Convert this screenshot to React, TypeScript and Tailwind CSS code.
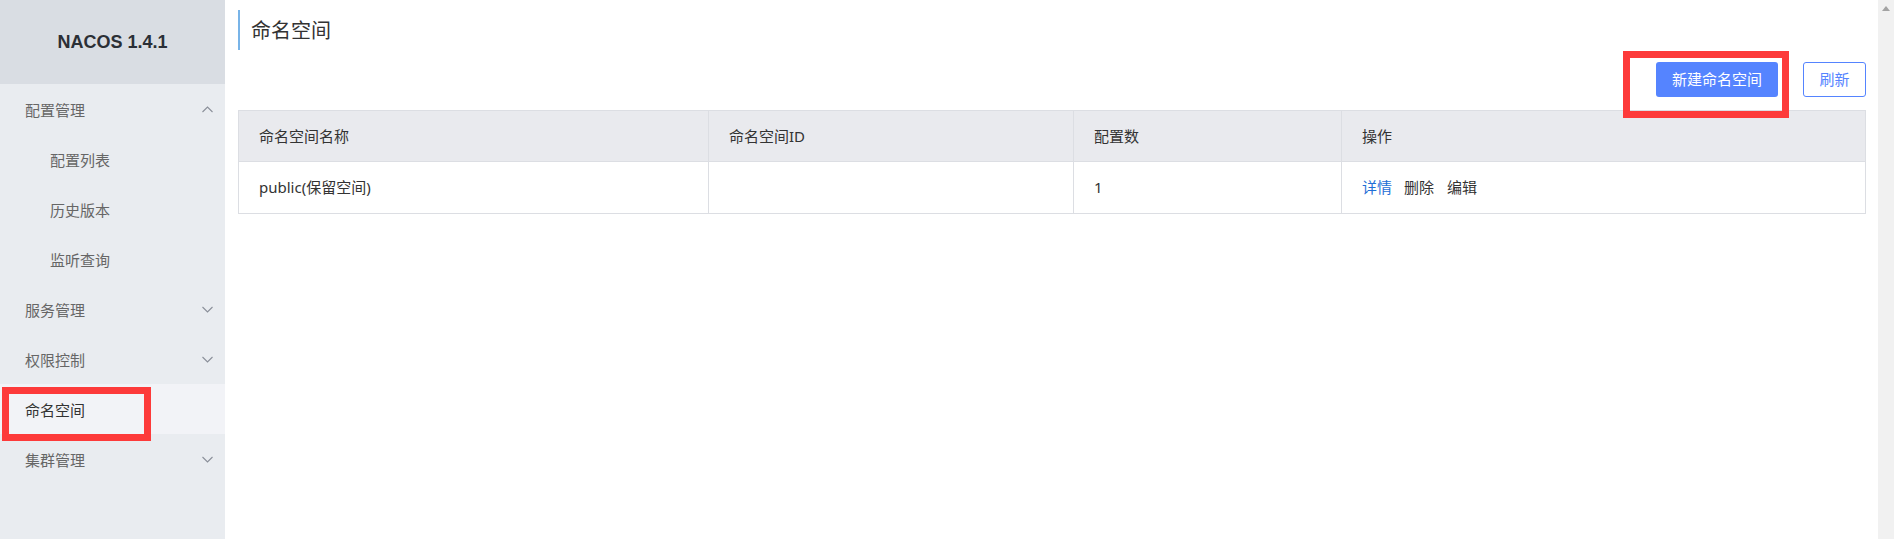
import { ReactNode } from "react";

const FONT = "font-['Noto_Sans','Noto_Sans_CJK_SC',sans-serif]";

type MenuItem = {
  label: string;
  sub?: boolean;
  chevron?: "up" | "down";
  active?: boolean;
};

const menu: MenuItem[] = [
  { label: "配置管理", chevron: "up" },
  { label: "配置列表", sub: true },
  { label: "历史版本", sub: true },
  { label: "监听查询", sub: true },
  { label: "服务管理", chevron: "down" },
  { label: "权限控制", chevron: "down" },
  { label: "命名空间", active: true },
  { label: "集群管理", chevron: "down" },
];

const columns = [
  { title: "命名空间名称", w: "w-[470px]" },
  { title: "命名空间ID", w: "w-[365px]" },
  { title: "配置数", w: "w-[268px]" },
  { title: "操作", w: "flex-1" },
];

export default function App() {
  return (
    <div className={`flex h-[539px] w-full overflow-hidden bg-white ${FONT}`}>
      <Sidebar />

      {/* Main */}
      <div className="flex-1 pt-[10px] pl-[13px] pr-[12px]">
        <div className="flex h-[40px] items-center border-l-2 border-[#78b4e8] pl-[11px] pt-[2px]">
          <h1 className="text-[20px] leading-none text-[#333]">命名空间</h1>
        </div>

        <div className="mt-[12px] flex h-[35px] justify-end gap-[25px]">
          <div className="relative">
            <button className="h-[35px] w-[122px] rounded-[3px] bg-[#5584ff] text-[15px] text-white">
              新建命名空间
            </button>
            <div className="pointer-events-none absolute left-[-33px] top-[-11px] h-[67px] w-[166px] border-[7px] border-[#fd3a3a]" />
          </div>
          <button className="h-[35px] w-[63px] rounded-[3px] border border-[#5584ff] bg-white text-[15px] text-[#5584ff]">
            刷新
          </button>
        </div>

        {/* Table */}
        <div className="mt-[13px] border border-[#dcdee3] text-[15px] text-[#333]">
          <Row header>
            {columns.map((c) => (
              <Cell key={c.title} className={c.w}>
                {c.title}
              </Cell>
            ))}
          </Row>
          <Row>
            <Cell className={columns[0].w}>public(保留空间)</Cell>
            <Cell className={columns[1].w}>{""}</Cell>
            <Cell className={columns[2].w}>1</Cell>
            <Cell className={columns[3].w}>
              <span className="text-[#1f6fd6]">详情</span>
              <span className="ml-[12px]">删除</span>
              <span className="ml-[13px]">编辑</span>
            </Cell>
          </Row>
        </div>
      </div>

      {/* Scrollbar */}
      <div className="flex w-[16px] justify-center bg-[#f1f1f1] pt-[6px]">
        <div className="h-0 w-0 border-x-[4.5px] border-b-[5px] border-x-transparent border-b-[#a3a3a3]" />
      </div>
    </div>
  );
}

function Sidebar() {
  return (
    <div className="w-[225px] shrink-0 bg-[#e9ecf0]">
      <div className="flex h-[84px] items-center justify-center bg-[#d9dde3]">
        <span className="font-['Liberation_Sans',sans-serif] text-[18px] font-bold text-[#2b2f36]">
          NACOS 1.4.1
        </span>
      </div>
      {menu.map((m) => (
        <div
          key={m.label}
          className={`relative flex h-[50px] items-center pr-[12px] pt-[3px] text-[15px] ${
            m.sub ? "pl-[50px]" : "pl-[25px]"
          } ${m.active ? "bg-[#f2f3f7] text-[#333]" : "text-[#666]"}`}
        >
          <span className="flex-1">{m.label}</span>
          {m.chevron && <Chevron dir={m.chevron} />}
          {m.active && (
            <div className="pointer-events-none absolute left-[2px] top-[3px] h-[54px] w-[149px] border-[7px] border-[#fd3a3a]" />
          )}
        </div>
      ))}
    </div>
  );
}

function Chevron({ dir }: { dir: "up" | "down" }) {
  return (
    <svg width="11" height="7" viewBox="0 0 11 7" fill="none" stroke="#8a8f99" strokeWidth="1.1" className="-mt-[3px]">
      {dir === "up" ? <path d="M0.5 6 L5.5 1 L10.5 6" /> : <path d="M0.5 1 L5.5 6 L10.5 1" />}
    </svg>
  );
}

function Row({ header, children }: { header?: boolean; children: ReactNode }) {
  return (
    <div
      className={`flex h-[51px] ${
        header ? "border-b border-[#dcdee3] bg-[#e9eaee]" : "bg-white"
      }`}
    >
      {children}
    </div>
  );
}

function Cell({ className, children }: { className?: string; children: ReactNode }) {
  return (
    <div className={`flex items-center border-r border-[#dcdee3] px-[20px] last:border-r-0 ${className ?? ""}`}>
      {children}
    </div>
  );
}
